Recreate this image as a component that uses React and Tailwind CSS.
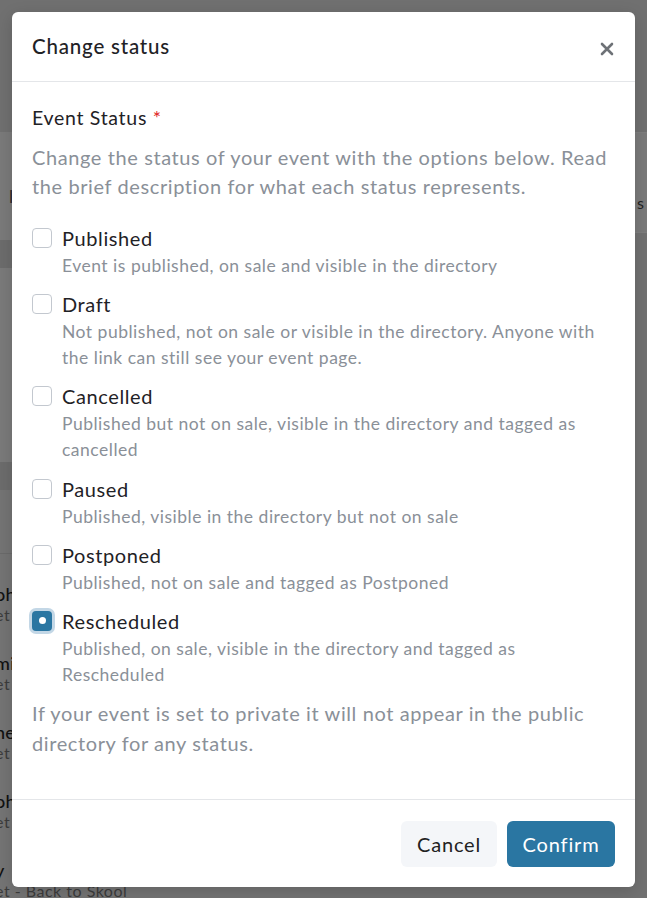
import React from "react";

const options = [
  { label: "Published", desc: "Event is published, on sale and visible in the directory" },
  { label: "Draft", desc: "Not published, not on sale or visible in the directory. Anyone with the link can still see your event page." },
  { label: "Cancelled", desc: "Published but not on sale, visible in the directory and tagged as cancelled" },
  { label: "Paused", desc: "Published, visible in the directory but not on sale" },
  { label: "Postponed", desc: "Published, not on sale and tagged as Postponed" },
  { label: "Rescheduled", desc: "Published, on sale, visible in the directory and tagged as Rescheduled", checked: true },
];

const bgItems = [
  { t: "ohoto", s: "et" },
  { t: "mi", s: "et" },
  { t: "ne", s: "et" },
  { t: "oh", s: "et" },
  { t: "y", s: "et - Back to Skool" },
];

function Checkbox({ checked }) {
  if (checked) {
    return (
      <span className="mt-[5px] flex h-5 w-5 shrink-0 items-center justify-center rounded-[4px] bg-[#2a76a2] ring-[3px] ring-[#c3d7e6]">
        <span className="h-[7px] w-[7px] rounded-full bg-white" />
      </span>
    );
  }
  return <span className="mt-[5px] h-5 w-5 shrink-0 rounded-[4px] border border-[#c3c8cf] bg-white" />;
}

export default function App() {
  return (
    <div className="relative h-[898px] w-[647px] overflow-hidden bg-[#707070] font-['Lato',sans-serif]">
      {/* background page (dimmed) */}
      <div className="flex h-full flex-col">
        <div className="h-[132px] shrink-0" />
        <div className="flex flex-1">
          <div className="flex w-[320px] flex-col">
            <div className="flex h-[108px] items-center bg-[#7a7a7a] pl-[9px] text-[18px] text-[#2a2a2a]">
              <span className="mt-[20px]">l</span>
            </div>
            <div className="h-[28px] bg-[#6c6c6c]" />
            <div className="h-[194px] bg-[#7a7a7a]" />
            <div className="h-[28px] bg-[#6c6c6c]" />
            <div className="h-[63px] bg-[#747474]" />
            <div className="flex flex-1 flex-col gap-[27px] border-t border-[#6a6a6a] bg-[#747474] pt-[29px]">
              {bgItems.map((it, i) => (
                <div key={i} className="-ml-[5px] flex flex-col">
                  <span className="text-[18px] font-medium leading-[22px] tracking-[0.3px] text-[#111]">{it.t}</span>
                  <span className="text-[16px] leading-[20px] tracking-[0.5px] text-[#3c3c3c]">{it.s}</span>
                </div>
              ))}
            </div>
          </div>
          <div className="flex flex-1 flex-col">
            <div className="flex h-[101px] items-center justify-end border-y border-[#7e7e7e] bg-[#7a7a7a] pr-[3px] text-[16px] text-[#222]">
              <span className="mt-[40px]">s</span>
            </div>
            <div className="flex-1 bg-[#717171]" />
          </div>
        </div>
      </div>

      {/* modal */}
      <div className="absolute left-[12px] top-[12px] flex h-[875px] w-[623px] flex-col rounded-[6px] bg-white shadow-[0_4px_16px_rgba(0,0,0,0.15)]">
        <div className="flex h-[70px] shrink-0 items-center justify-between border-b border-[#e4e6e9] pl-5 pr-5">
          <span className="text-[20.5px] font-medium tracking-[0.8px] text-[#1f2226]">Change status</span>
          <svg width="14" height="14" viewBox="0 0 14 14" className="mr-[1px] mt-[4px]">
            <path d="M2 2L12 12M12 2L2 12" stroke="#6e7277" strokeWidth="2.6" strokeLinecap="round" />
          </svg>
        </div>

        <div className="flex flex-1 flex-col px-5 pt-[22px]">
          <div className="text-[19.5px] leading-[27px] tracking-[0.7px] text-[#1f2226]">
            Event Status <span className="text-[#e02424]">*</span>
          </div>
          <p className="mt-[12px] text-[20px] leading-[29px] tracking-[0.6px] text-[#8a9098]">
            Change the status of your event with the options below. Read the brief description for what each status represents.
          </p>
          <div className="mt-[22px] flex flex-col gap-[10.2px]">
            {options.map((o) => (
              <div key={o.label} className="flex gap-[10px]">
                <Checkbox checked={o.checked} />
                <div className="flex flex-col">
                  <span className="text-[20px] leading-[30px] tracking-[0.6px] text-[#1f2226]">{o.label}</span>
                  <span className="text-[17.5px] leading-[26px] tracking-[0.5px] text-[#8a9098]">{o.desc}</span>
                </div>
              </div>
            ))}
            <p className="text-[20px] leading-[30px] tracking-[0.6px] text-[#8a9098]">
              If your event is set to private it will not appear in the public directory for any status.
            </p>
          </div>
        </div>

        <div className="flex h-[88px] shrink-0 items-center justify-end gap-[10px] border-t border-[#e4e6e9] px-5">
          <button className="h-[46px] w-[96px] rounded-[6px] bg-[#f4f6f9] text-[20px] tracking-[0.8px] text-[#222]">Cancel</button>
          <button className="h-[46px] w-[108px] rounded-[6px] bg-[#2a76a2] text-[20px] tracking-[0.85px] text-white">Confirm</button>
        </div>
      </div>
    </div>
  );
}
